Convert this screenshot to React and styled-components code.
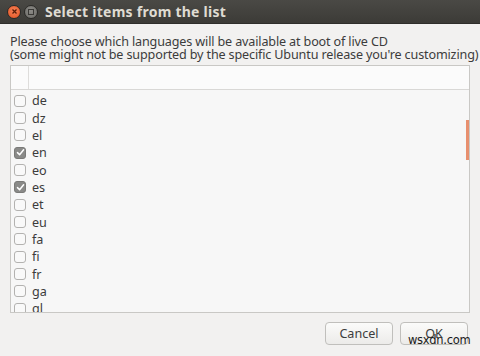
import React from "react";
import styled, { createGlobalStyle } from "styled-components";

const Global = createGlobalStyle`
  html, body { margin: 0; padding: 0; background: #f2f1f0; }
  body { font-family: "Noto Sans", "DejaVu Sans", sans-serif; }
`;

const Window = styled.div`
  width: 480px;
  height: 356px;
  background: #f2f1f0;
  display: flex;
  flex-direction: column;
  position: relative;
  overflow: hidden;
`;

const TitleBar = styled.div`
  height: 23px;
  flex: none;
  background: linear-gradient(#4a4945, #3c3b37);
  display: flex;
  align-items: center;
  padding-left: 7px;
  gap: 3px;
  border-bottom: 1px solid #2f2e2b;
`;

const WinButton = styled.div`
  width: 12px;
  height: 12px;
  border-radius: 50%;
  background: ${(p) => (p.close ? "radial-gradient(circle at 50% 40%, #f58259, #e3521f)" : "radial-gradient(circle at 50% 40%, #8c8b87, #6b6a66)")};
  border: 1px solid #2b2a27;
  display: flex;
  align-items: center;
  justify-content: center;
`;

const Title = styled.div`
  color: #dfdbd2;
  font-weight: bold;
  font-size: 14px;
  margin-left: 4px;
  letter-spacing: 0.25px;
`;

const Body = styled.div`
  display: flex;
  flex-direction: column;
  padding: 11px 10px 0 10px;
`;

const Message = styled.div`
  font-size: 12.6px;
  line-height: 13px;
  color: #3c3c3c;
  letter-spacing: -0.15px;
  white-space: nowrap;
`;

const ListBox = styled.div`
  margin-top: 4px;
  height: 246px;
  border: 1px solid #c9c8c5;
  background: #f7f7f7;
  display: flex;
  flex-direction: column;
  overflow: hidden;
  position: relative;
`;

const Header = styled.div`
  height: 23px;
  flex: none;
  display: grid;
  grid-template-columns: 18px 1fr;
  background: #fbfbfb;
  border-bottom: 1px solid #d9d8d6;
`;

const HeaderCell = styled.div`
  border-right: ${(p) => (p.divider ? "1px solid #dedddb" : "none")};
`;

const Rows = styled.div`
  padding-top: 2px;
  display: flex;
  flex-direction: column;
`;

const Row = styled.div`
  height: 17.35px;
  flex: none;
  display: flex;
  align-items: center;
  padding-left: 3px;
  gap: 6px;
  font-size: 12.6px;
  color: #3c3c3c;
`;

const Box = styled.div`
  width: 10px;
  height: 10px;
  border: 1px solid ${(p) => (p.checked ? "#7a7a78" : "#b3b2b0")};
  border-radius: 3px;
  background: ${(p) => (p.checked ? "#8a8a88" : "#f9f9f9")};
  display: flex;
  align-items: center;
  justify-content: center;
`;

const Scroll = styled.div`
  position: absolute;
  right: 0;
  top: 54px;
  width: 3px;
  height: 40px;
  background: #e8906f;
`;

const Footer = styled.div`
  display: flex;
  justify-content: flex-end;
  gap: 7px;
  padding: 9px 12px 0 0;
`;

const Button = styled.div`
  width: 66px;
  height: 21px;
  border: 1px solid #c0bfbc;
  border-radius: 4px;
  background: linear-gradient(#fbfbfa, #ecebe9);
  display: flex;
  align-items: center;
  justify-content: center;
  font-size: 12.6px;
  color: #3c3c3c;
`;

const Watermark = styled.div`
  position: absolute;
  left: 408px;
  top: 333px;
  font-family: "DejaVu Sans", sans-serif;
  font-size: 11.5px;
  color: #1a1a1a;
  letter-spacing: -0.3px;
`;

const items = [
  ["de"], ["dz"], ["el"], ["en", true], ["eo"], ["es", true], ["et"], ["eu"],
  ["fa"], ["fi"], ["fr"], ["ga"], ["gl"],
];

function Check() {
  return (
    <svg width="9" height="9" viewBox="0 0 9 9">
      <path d="M1.5 4.6 L3.6 6.7 L7.6 1.8" fill="none" stroke="#fff" strokeWidth="1.5" strokeLinecap="round" strokeLinejoin="round" />
    </svg>
  );
}

export default function App() {
  return (
    <>
      <Global />
      <Window>
        <TitleBar>
          <WinButton close>
            <svg width="7" height="7" viewBox="0 0 7 7">
              <path d="M1.5 1.5 L5.5 5.5 M5.5 1.5 L1.5 5.5" stroke="#5a1d08" strokeWidth="1.3" />
            </svg>
          </WinButton>
          <WinButton>
            <svg width="6" height="6" viewBox="0 0 6 6">
              <rect x="0.5" y="0.5" width="5" height="5" fill="none" stroke="#3a3936" strokeWidth="1" />
            </svg>
          </WinButton>
          <Title>Select items from the list</Title>
        </TitleBar>
        <Body>
          <Message>Please choose which languages will be available at boot of live CD</Message>
          <Message>(some might not be supported by the specific Ubuntu release you're customizing)</Message>
          <ListBox>
            <Header>
              <HeaderCell divider />
              <HeaderCell />
            </Header>
            <Rows>
              {items.map(([label, checked]) => (
                <Row key={label}>
                  <Box checked={checked}>{checked && <Check />}</Box>
                  {label}
                </Row>
              ))}
            </Rows>
            <Scroll />
          </ListBox>
        </Body>
        <Footer>
          <Button>Cancel</Button>
          <Button>OK</Button>
        </Footer>
        <Watermark>wsxdn.com</Watermark>
      </Window>
    </>
  );
}
